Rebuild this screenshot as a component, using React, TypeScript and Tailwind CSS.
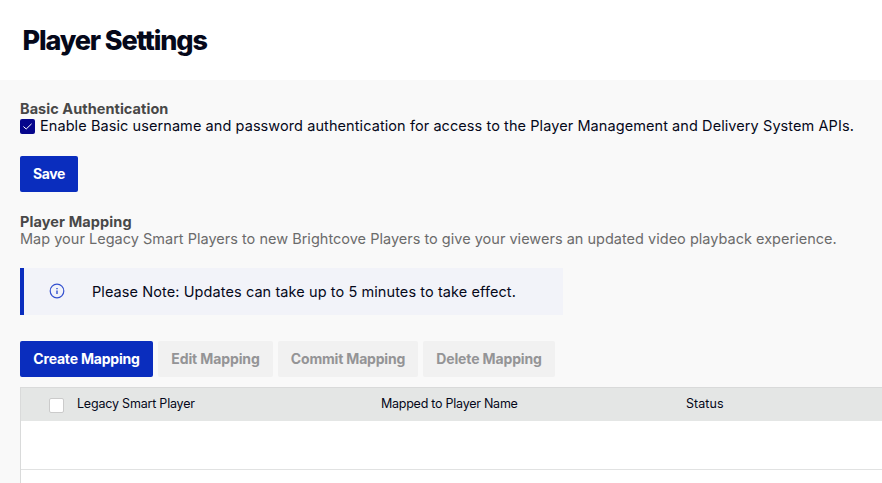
const actions = [
  { label: "Create Mapping", style: "w-[133px] bg-[#0a2dbe] text-white tracking-[-0.2px]" },
  { label: "Edit Mapping", style: "w-[115px] bg-[#f1f1f1] text-[#949496] tracking-[-0.12px]" },
  { label: "Commit Mapping", style: "w-[140px] bg-[#f1f1f1] text-[#949496] tracking-[-0.18px]" },
  { label: "Delete Mapping", style: "w-[132px] bg-[#f1f1f1] text-[#949496] tracking-[-0.13px]" },
];

export default function App() {
  return (
    <div className="flex h-[483px] w-full flex-col overflow-hidden bg-[#f9f9f9] font-['Inter','Liberation_Sans',sans-serif] whitespace-nowrap text-[#05081a]">
      <header className="flex h-20 shrink-0 items-center bg-white pt-0.5 pl-[22.5px]">
        <h1 className="text-[27px] leading-8 font-extrabold tracking-[-1.15px]">Player Settings</h1>
      </header>

      <main className="flex flex-col pl-5">
        <section className="pt-5">
          <h2 className="text-[14.5px] leading-[17px] font-bold tracking-[0.05px] text-[#484848]">Basic Authentication</h2>
          <label className="flex h-[18px] items-start gap-[5px]">
            <span className="mt-[2px] flex size-[15px] shrink-0 items-center justify-center rounded-[2px] bg-[#06068c]">
              <svg viewBox="0 0 15 15" className="size-[15px]" fill="none" stroke="#fff" strokeWidth="1">
                <path d="M3.4 7.5 6.2 10 11.6 4.8" />
              </svg>
            </span>
            <span className="text-[14.5px] leading-[17px] tracking-[0.08px]">
              Enable Basic username and password authentication for access to the Player Management and Delivery System APIs.
            </span>
          </label>
          <button className="mt-[21px] block h-9 w-[58px] rounded-[2px] bg-[#0a2dbe] text-[14px] leading-5 font-bold tracking-[-0.4px] text-white">
            Save
          </button>
        </section>

        <section className="pt-[21px]">
          <h2 className="text-[14.5px] leading-[17px] font-bold tracking-[0.1px] text-[#484848]">Player Mapping</h2>
          <p className="text-[14.5px] leading-[17px] tracking-[0.012px] text-[#6b6b6b]">
            Map your Legacy Smart Players to new Brightcove Players to give your viewers an updated video playback experience.
          </p>
        </section>

        <div className="mt-[21px] flex h-[47px] w-[543px] items-center border-l-4 border-[#0a2dbe] bg-[#f2f3f9] pl-[25px]">
          <svg viewBox="0 0 16 16" className="mb-[2px] size-4" fill="none" stroke="#3450cf" strokeWidth="1.2">
            <circle cx="8" cy="8" r="6.8" />
            <path d="M8 7.4v3.6M8 5v1.2" strokeWidth="1.4" />
          </svg>
          <p className="ml-[27px] text-[14.5px] leading-[18px] tracking-[0.085px]">
            Please Note: Updates can take up to 5 minutes to take effect.
          </p>
        </div>

        <div className="mt-[26px] flex gap-[5px]">
          {actions.map((a) => (
            <button key={a.label} className={`h-9 shrink-0 rounded-[2px] text-[14px] leading-5 font-bold ${a.style}`}>
              {a.label}
            </button>
          ))}
        </div>

        <div className="mt-[10px] border-t border-l border-[#d9dada] bg-white text-[12.5px]">
          <div className="flex h-[33px] bg-[#e4e6e5] leading-4">
            <div className="flex w-[360px] pl-7">
              <span className="mt-[10px] size-[15px] rounded-[2px] border border-[#cbcbcb] bg-white" />
              <span className="mt-2 ml-[13px] tracking-[-0.2px]">Legacy Smart Player</span>
            </div>
            <div className="w-[305px] pt-2 tracking-[-0.25px]">Mapped to Player Name</div>
            <div className="pt-2 tracking-[0.05px]">Status</div>
          </div>
          <div className="h-[49px] border-b border-[#e1e2e2]" />
          <div className="h-[49px]" />
        </div>
      </main>
    </div>
  );
}
